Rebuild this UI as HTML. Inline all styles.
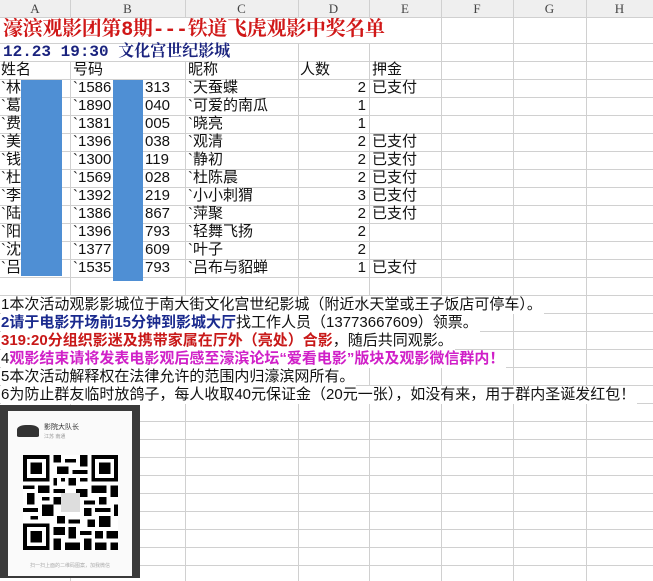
<!DOCTYPE html>
<html><head><meta charset="utf-8"><style>
body{margin:0;width:653px;height:581px;overflow:hidden;background:#fff;position:relative;font-family:"Liberation Sans","Noto Sans CJK SC",sans-serif;}
.a{position:absolute;white-space:nowrap;}
.v{position:absolute;top:0;width:1px;height:581px;background:#d0d0d0;}
.h{position:absolute;left:0;width:653px;height:1px;background:#d0d0d0;}
.ch{position:absolute;top:0;height:17px;font:13px "Liberation Serif","Noto Serif CJK SC",serif;color:#444;text-align:center;line-height:17px;}
.t{font-size:15px;line-height:18px;color:#111;}
.n{font-size:15px;line-height:18px;background:#fff;padding-right:2px;left:1px;}
</style></head><body>
<div class="a" style="left:0;top:0;width:653px;height:17px;background:#efefef;"></div>
<div class="ch" style="left:0;width:70px">A</div>
<div class="ch" style="left:70px;width:115px">B</div>
<div class="ch" style="left:185px;width:113px">C</div>
<div class="ch" style="left:298px;width:71px">D</div>
<div class="ch" style="left:369px;width:72px">E</div>
<div class="ch" style="left:441px;width:72px">F</div>
<div class="ch" style="left:513px;width:73px">G</div>
<div class="ch" style="left:586px;width:67px">H</div>
<div class="v" style="left:70px"></div><div class="v" style="left:185px"></div><div class="v" style="left:298px"></div><div class="v" style="left:369px"></div><div class="v" style="left:441px"></div><div class="v" style="left:513px"></div><div class="v" style="left:586px"></div>
<div class="h" style="top:17px"></div><div class="h" style="top:43px"></div>
<div class="a" style="left:0;top:61px;width:653px;height:520px;background:repeating-linear-gradient(to bottom,#d0d0d0 0,#d0d0d0 1px,transparent 1px,transparent 18px);"></div>
<div class="a" style="left:0;top:18px;width:440px;height:25px;background:#fff"></div>
<div class="a" style="left:3px;top:18px;font:bold 20px/25px 'Liberation Mono','Noto Serif CJK SC',serif;color:#d01818;letter-spacing:-0.3px">濠滨观影团第8期---铁道飞虎观影中奖名单</div>
<div class="a" style="left:0;top:44px;width:297px;height:17px;background:#fff"></div>
<div class="a" style="left:3px;top:43px;font:bold 16px/19px 'Liberation Mono','Noto Serif CJK SC',serif;color:#1a237e;">12.23 19:30 文化宫世纪影城</div>
<div class="a t" style="left:1px;top:61px">姓名</div>
<div class="a t" style="left:73px;top:61px">号码</div>
<div class="a t" style="left:188px;top:61px">昵称</div>
<div class="a t" style="left:300px;top:61px">人数</div>
<div class="a t" style="left:372px;top:61px">押金</div>
<div class="a t" style="left:1px;top:79px;line-height:18px">`林<br>`葛<br>`费<br>`美<br>`钱<br>`杜<br>`李<br>`陆<br>`阳<br>`沈<br>`吕</div>
<div class="a t" style="left:73px;top:79px;line-height:18px">`1586<br>`1890<br>`1381<br>`1396<br>`1300<br>`1569<br>`1392<br>`1386<br>`1396<br>`1377<br>`1535</div>
<div class="a t" style="left:145px;top:79px;line-height:18px">313<br>040<br>005<br>038<br>119<br>028<br>219<br>867<br>793<br>609<br>793</div>
<div class="a t" style="left:188px;top:79px;line-height:18px">`天蚕蝶<br>`可爱的南瓜<br>`晓亮<br>`观清<br>`静初<br>`杜陈晨<br>`小小刺猬<br>`萍聚<br>`轻舞飞扬<br>`叶子<br>`吕布与貂蝉</div>
<div class="a t" style="left:350px;top:79px;line-height:18px;text-align:right;width:16px">2<br>1<br>1<br>2<br>2<br>2<br>3<br>2<br>2<br>2<br>1</div>
<div class="a t" style="left:372px;top:79px;line-height:18px">已支付<br><br><br>已支付<br>已支付<br>已支付<br>已支付<br>已支付<br><br><br>已支付</div>
<div class="a" style="left:21px;top:80px;width:41px;height:196px;background:#4f8fd4"></div>
<div class="a" style="left:113px;top:80px;width:30px;height:201px;background:#4f8fd4"></div>
<div class="a n" style="top:296px;color:#111">1本次活动观影影城位于南大街文化宫世纪影城（附近水天堂或王子饭店可停车）。</div>
<div class="a n" style="top:314px;color:#111"><b style="color:#1a2a8e">2请于电影开场前15分钟到影城大厅</b>找工作人员（13773667609）领票。</div>
<div class="a n" style="top:332px;color:#111"><b style="color:#c81818">319:20分组织影迷及携带家属在厅外（亮处）合影</b>，随后共同观影。</div>
<div class="a n" style="top:350px;color:#111">4<b style="color:#d020c8">观影结束请将发表电影观后感至濠滨论坛“爱看电影”版块及观影微信群内！</b></div>
<div class="a n" style="top:368px;color:#111">5本次活动解释权在法律允许的范围内归濠滨网所有。</div>
<div class="a n" style="top:386px;color:#111">6为防止群友临时放鸽子，每人收取40元保证金（20元一张），如没有来，用于群内圣诞发红包！</div>
<div class="a" style="left:0;top:405px;width:140px;height:173px;background:#3a3a3a"></div>
<div class="a" style="left:8px;top:411px;width:124px;height:165px;background:#fafafa"></div>
<div class="a" style="left:17px;top:425px;width:22px;height:12px;background:#333;border-radius:40% 40% 10% 10%"></div>
<div class="a" style="left:44px;top:422px;font-size:7px;color:#333">影院大队长</div>
<div class="a" style="left:44px;top:433px;font-size:5px;color:#999">江苏 南通</div>
<svg class="a" style="left:23px;top:455px" width="95" height="95" viewBox="0 0 25 25" shape-rendering="crispEdges">
<rect width="25" height="25" fill="#fff"/>
<g fill="#000">
<path d="M0 0h7v7h-7zM18 0h7v7h-7zM0 18h7v7h-7z"/>
</g>
<g fill="#fff"><path d="M1 1h5v5h-5zM19 1h5v5h-5zM1 19h5v5h-5z"/></g>
<g fill="#000"><path d="M2 2h3v3h-3zM20 2h3v3h-3zM2 20h3v3h-3z"/>
<path d="M8 0h2v2h-2zM11 1h3v1h-3zM15 0h2v3h-2zM9 3h3v2h-3zM13 4h4v1h-4zM8 6h1v2h-1zM10 6h1v1h-1zM12 6h2v2h-2zM15 6h2v1h-2zM0 8h3v1h-3zM4 8h3v2h-3zM8 9h3v1h-3zM14 9h3v2h-3zM18 8h4v2h-4zM23 8h2v3h-2zM1 10h2v3h-2zM5 11h2v1h-2zM8 11h2v2h-2zM16 12h3v1h-3zM20 11h2v2h-2zM0 14h4v1h-4zM5 13h3v3h-3zM16 14h2v2h-2zM19 14h4v1h-4zM24 13h1v3h-1zM2 16h2v1h-2zM9 16h2v2h-2zM12 17h3v1h-3zM17 17h2v2h-2zM20 16h3v3h-3zM8 19h3v2h-3zM12 19h2v3h-2zM15 20h3v1h-3zM19 20h2v2h-2zM22 20h3v2h-3zM8 22h2v3h-2zM11 23h4v2h-4zM16 22h2v3h-2zM19 23h3v2h-3zM23 23h2v2h-2z"/>
<path d="M10 10h5v5h-5z" fill="#ddd"/></g>
</svg>
<div class="a" style="left:30px;top:562px;font-size:5px;color:#aaa">扫一扫上面的二维码图案，加我微信</div>
</body></html>
